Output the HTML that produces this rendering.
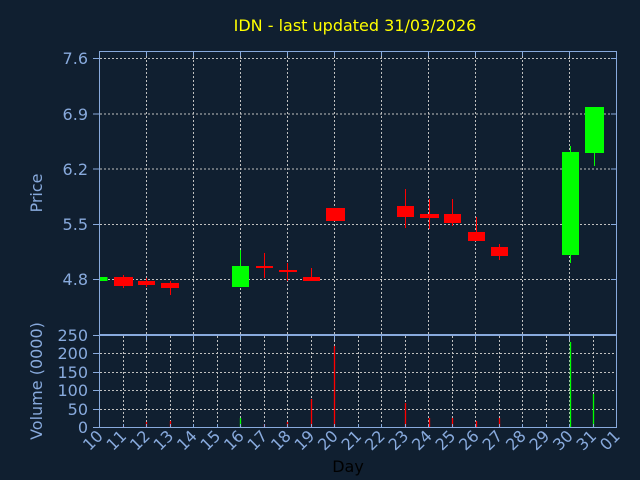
<!DOCTYPE html>
<html><head><style>body{margin:0;background:#101f30}svg{display:block}</style></head><body>
<svg width="640" height="480" xmlns="http://www.w3.org/2000/svg" font-family="DejaVu Sans, Liberation Sans, sans-serif">
<rect width="640" height="480" fill="#101f30"/>
<text x="355" y="31" fill="#ffff00" font-size="16" text-anchor="middle">IDN - last updated 31/03/2026</text>
<g stroke="#c0c0c0" stroke-dasharray="2,2" stroke-width="1">
<line x1="100" y1="58.5" x2="617" y2="58.5"/><line x1="100" y1="114" x2="617" y2="114"/><line x1="100" y1="169" x2="617" y2="169"/><line x1="100" y1="224.5" x2="617" y2="224.5"/><line x1="100" y1="279.5" x2="617" y2="279.5"/>
<line x1="146.5" y1="52" x2="146.5" y2="334"/><line x1="193.5" y1="52" x2="193.5" y2="334"/><line x1="240.5" y1="52" x2="240.5" y2="334"/><line x1="287.5" y1="52" x2="287.5" y2="334"/><line x1="334.5" y1="52" x2="334.5" y2="334"/><line x1="381.5" y1="52" x2="381.5" y2="334"/><line x1="428.5" y1="52" x2="428.5" y2="334"/><line x1="475.5" y1="52" x2="475.5" y2="334"/><line x1="522.5" y1="52" x2="522.5" y2="334"/><line x1="569.5" y1="52" x2="569.5" y2="334"/>
<line x1="100" y1="353.5" x2="617" y2="353.5"/><line x1="100" y1="372.5" x2="617" y2="372.5"/><line x1="100" y1="390.5" x2="617" y2="390.5"/><line x1="100" y1="409.5" x2="617" y2="409.5"/>
<line x1="123.5" y1="336" x2="123.5" y2="427"/><line x1="146.5" y1="336" x2="146.5" y2="427"/><line x1="170.5" y1="336" x2="170.5" y2="427"/><line x1="193.5" y1="336" x2="193.5" y2="427"/><line x1="217.5" y1="336" x2="217.5" y2="427"/><line x1="240.5" y1="336" x2="240.5" y2="427"/><line x1="264.5" y1="336" x2="264.5" y2="427"/><line x1="287.5" y1="336" x2="287.5" y2="427"/><line x1="311.5" y1="336" x2="311.5" y2="427"/><line x1="334.5" y1="336" x2="334.5" y2="427"/><line x1="358.5" y1="336" x2="358.5" y2="427"/><line x1="381.5" y1="336" x2="381.5" y2="427"/><line x1="405.5" y1="336" x2="405.5" y2="427"/><line x1="428.5" y1="336" x2="428.5" y2="427"/><line x1="452.5" y1="336" x2="452.5" y2="427"/><line x1="475.5" y1="336" x2="475.5" y2="427"/><line x1="499.5" y1="336" x2="499.5" y2="427"/><line x1="522.5" y1="336" x2="522.5" y2="427"/><line x1="546.5" y1="336" x2="546.5" y2="427"/><line x1="569.5" y1="336" x2="569.5" y2="427"/><line x1="593.5" y1="336" x2="593.5" y2="427"/>
</g>
<g stroke-width="1">
<rect x="99.5" y="277" width="8" height="4" fill="#00ff00"/>
<line x1="123.5" y1="275" x2="123.5" y2="288" stroke="#ff0000"/><rect x="114" y="277" width="19" height="9" fill="#ff0000"/>
<line x1="146.5" y1="278" x2="146.5" y2="287" stroke="#ff0000"/><rect x="138" y="281" width="17" height="4" fill="#ff0000"/>
<line x1="170.5" y1="281" x2="170.5" y2="295" stroke="#ff0000"/><rect x="161" y="283" width="18" height="5" fill="#ff0000"/>
<line x1="240.5" y1="250" x2="240.5" y2="287" stroke="#00ff00"/><rect x="232" y="266" width="17" height="21" fill="#00ff00"/>
<line x1="264.5" y1="253" x2="264.5" y2="278" stroke="#ff0000"/><rect x="256" y="266" width="17" height="2" fill="#ff0000"/>
<line x1="287.5" y1="263" x2="287.5" y2="281" stroke="#ff0000"/><rect x="279" y="270" width="18" height="2" fill="#ff0000"/>
<line x1="311.5" y1="268" x2="311.5" y2="281" stroke="#ff0000"/><rect x="303" y="277" width="17" height="4" fill="#ff0000"/>
<rect x="326" y="208" width="19" height="13" fill="#ff0000"/>
<line x1="405.5" y1="189" x2="405.5" y2="228" stroke="#ff0000"/><rect x="397" y="206" width="17" height="11" fill="#ff0000"/>
<line x1="429.5" y1="199" x2="429.5" y2="229" stroke="#ff0000"/><rect x="420" y="214" width="19" height="4" fill="#ff0000"/>
<line x1="452.5" y1="199" x2="452.5" y2="226" stroke="#ff0000"/><rect x="444" y="214" width="17" height="9" fill="#ff0000"/>
<line x1="476.5" y1="217" x2="476.5" y2="241" stroke="#ff0000"/><rect x="468" y="232" width="17" height="9" fill="#ff0000"/>
<line x1="499.5" y1="244" x2="499.5" y2="260" stroke="#ff0000"/><rect x="491" y="247" width="17" height="9" fill="#ff0000"/>
<line x1="570.5" y1="146" x2="570.5" y2="263" stroke="#00ff00"/><rect x="562" y="152" width="17" height="103" fill="#00ff00"/>
<line x1="594.5" y1="153" x2="594.5" y2="166" stroke="#00ff00"/><rect x="585" y="107" width="19" height="46" fill="#00ff00"/>
</g>
<g stroke-width="1.3">
<line x1="123.5" y1="426" x2="123.5" y2="427" stroke="#ff0000"/>
<line x1="146.5" y1="422" x2="146.5" y2="427" stroke="#ff0000"/>
<line x1="170.5" y1="421" x2="170.5" y2="427" stroke="#ff0000"/>
<line x1="240.5" y1="418" x2="240.5" y2="427" stroke="#00ff00"/>
<line x1="264.5" y1="424" x2="264.5" y2="427" stroke="#ff0000"/>
<line x1="287.5" y1="422" x2="287.5" y2="427" stroke="#ff0000"/>
<line x1="311.5" y1="399" x2="311.5" y2="427" stroke="#ff0000"/>
<line x1="334.5" y1="346" x2="334.5" y2="427" stroke="#ff0000"/>
<line x1="405.5" y1="403" x2="405.5" y2="427" stroke="#ff0000"/>
<line x1="429.5" y1="418" x2="429.5" y2="427" stroke="#ff0000"/>
<line x1="452.5" y1="418" x2="452.5" y2="427" stroke="#ff0000"/>
<line x1="476.5" y1="421" x2="476.5" y2="427" stroke="#ff0000"/>
<line x1="499.5" y1="418" x2="499.5" y2="427" stroke="#ff0000"/>
<line x1="570.5" y1="342" x2="570.5" y2="427" stroke="#00ff00"/>
<line x1="593.5" y1="394" x2="593.5" y2="427" stroke="#00ff00"/>
</g>
<g stroke="#88aadd" fill="none" stroke-width="1">
<rect x="99.5" y="51.5" width="517" height="283"/>
<rect x="99.5" y="335.5" width="517" height="92"/>
<path d="M93 58.5h7M93 114h7M93 169h7M93 224.5h7M93 279.5h7M93 335.5h7M93 353.5h7M93 372.5h7M93 390.5h7M93 409.5h7M93 427.5h7M611 58.5h6M611 114h6M611 169h6M611 224.5h6M611 279.5h6"/>
<path d="M146.5 51v5M193.5 51v5M240.5 51v5M287.5 51v5M334.5 51v5M381.5 51v5M428.5 51v5M475.5 51v5M522.5 51v5M569.5 51v5M146.5 335v5M193.5 335v5M240.5 335v5M287.5 335v5M334.5 335v5M381.5 335v5M428.5 335v5M475.5 335v5M522.5 335v5M569.5 335v5"/>
<path d="M123.5 424v3M146.5 424v3M170.5 424v3M193.5 424v3M217.5 424v3M240.5 424v3M264.5 424v3M287.5 424v3M311.5 424v3M334.5 424v3M358.5 424v3M381.5 424v3M405.5 424v3M428.5 424v3M452.5 424v3M475.5 424v3M499.5 424v3M522.5 424v3M546.5 424v3M569.5 424v3M593.5 424v3"/>
</g>
<g fill="#88aadd" font-size="16" text-anchor="end">
<text x="88" y="64">7.6</text><text x="88" y="120">6.9</text><text x="88" y="175">6.2</text><text x="88" y="230">5.5</text><text x="88" y="285">4.8</text>
<text x="88" y="341">250</text><text x="88" y="359">200</text><text x="88" y="378">150</text><text x="88" y="396">100</text><text x="88" y="415">50</text><text x="88" y="433">0</text>
</g>
<text transform="translate(42,193) rotate(-90)" fill="#88aadd" font-size="16" text-anchor="middle">Price</text>
<text transform="translate(42,381) rotate(-90)" fill="#88aadd" font-size="16" text-anchor="middle">Volume (0000)</text>
<g fill="#88aadd" font-size="16" text-anchor="end">
<text transform="translate(104,437) rotate(-45)">10</text>
<text transform="translate(127.5,437) rotate(-45)">11</text>
<text transform="translate(151,437) rotate(-45)">12</text>
<text transform="translate(174.5,437) rotate(-45)">13</text>
<text transform="translate(198,437) rotate(-45)">14</text>
<text transform="translate(221.5,437) rotate(-45)">15</text>
<text transform="translate(245,437) rotate(-45)">16</text>
<text transform="translate(268.5,437) rotate(-45)">17</text>
<text transform="translate(292,437) rotate(-45)">18</text>
<text transform="translate(315.5,437) rotate(-45)">19</text>
<text transform="translate(339,437) rotate(-45)">20</text>
<text transform="translate(362.5,437) rotate(-45)">21</text>
<text transform="translate(386,437) rotate(-45)">22</text>
<text transform="translate(409.5,437) rotate(-45)">23</text>
<text transform="translate(433,437) rotate(-45)">24</text>
<text transform="translate(456.5,437) rotate(-45)">25</text>
<text transform="translate(480,437) rotate(-45)">26</text>
<text transform="translate(503.5,437) rotate(-45)">27</text>
<text transform="translate(527,437) rotate(-45)">28</text>
<text transform="translate(550.5,437) rotate(-45)">29</text>
<text transform="translate(574,437) rotate(-45)">30</text>
<text transform="translate(597.5,437) rotate(-45)">31</text>
<text transform="translate(621,437) rotate(-45)">01</text>
</g>
<text x="348" y="472" fill="#000000" font-size="16" text-anchor="middle">Day</text>
</svg>
</body></html>
